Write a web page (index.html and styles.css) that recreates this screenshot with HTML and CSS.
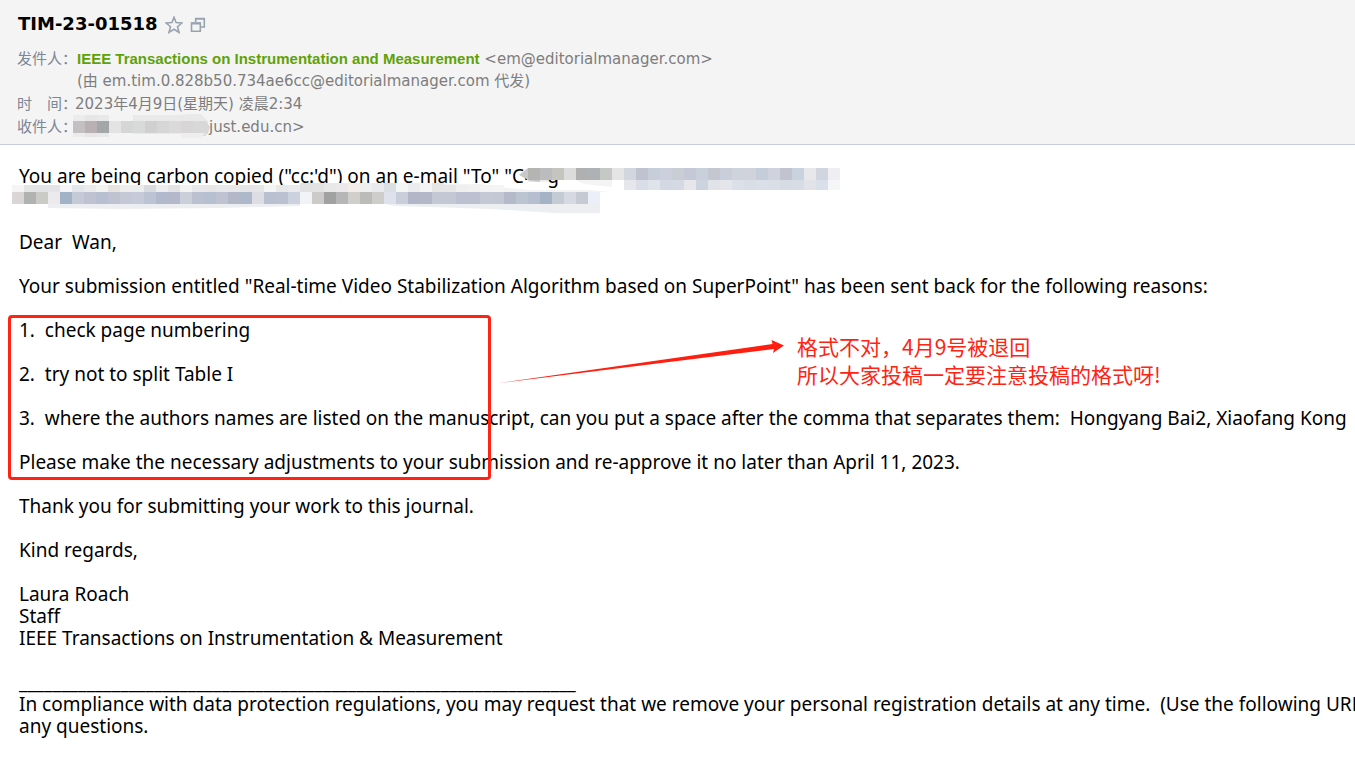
FILE: index.html
```html
<!DOCTYPE html>
<html lang="zh-CN">
<head>
<meta charset="utf-8">
<title>TIM-23-01518</title>
<link rel="stylesheet" href="styles.css">
</head>
<body>
<header class="mail-header">
  <div class="subject-row">
    <h1 class="subject">TIM-23-01518</h1>
    <button class="icon-button" type="button" aria-label="星标">
      <svg width="18" height="18" viewBox="0 0 18 18"><path d="M9 1.3 11.1 6.6 16.9 7 12.5 10.7 14 16.4 9 13.3 4 16.4 5.5 10.7 1.1 7 6.9 6.6Z" fill="none" stroke="#98a3b0" stroke-width="1.6"/></svg>
    </button>
    <button class="icon-button" type="button" aria-label="新窗口打开">
      <svg width="16" height="16" viewBox="0 0 16 16" fill="none" stroke="#98a3b0"><path d="M5.7 5V1.5H14.3V10H10.5M5.2 2H15" stroke-width="1.6"/><path d="M1.5 6H10.3V14.2H1.5Z" stroke-width="1.6"/><path d="M1 6.5H11" stroke-width="2"/></svg>
    </button>
  </div>
  <dl class="meta">
    <dt>发件人：</dt>
    <dd class="sender"><a class="sender-name" href="#">IEEE Transactions on Instrumentation and Measurement</a> &lt;em@editorialmanager.com&gt;<br>(由 em.tim.0.828b50.734ae6cc@editorialmanager.com 代发)</dd>
    <dt>时　间：</dt>
    <dd>2023年4月9日(星期天) 凌晨2:34</dd>
    <dt>收件人：</dt>
    <dd class="recipient"><svg class="mask-recipient" width="138" height="26" viewBox="73 112 138 26" aria-hidden="true"></svg><span>just.edu.cn&gt;</span></dd>
  </dl>
</header>
<main class="mail-body">
  <p>You are being carbon copied ("cc:'d") on an e-mail "To" "Cong<br>&nbsp;</p>
  <p>Dear  Wan,</p>
  <p>Your submission entitled "Real-time Video Stabilization Algorithm based on SuperPoint" has been sent back for the following reasons:</p>
  <p>1.  check page numbering</p>
  <p>2.  try not to split Table I</p>
  <p>3.  where the authors names are listed on the manuscript, can you put a space after the comma that separates them:  Hongyang Bai2, Xiaofang Kong</p>
  <p>Please make the necessary adjustments to your submission and re-approve it no later than April 11, 2023.</p>
  <p>Thank you for submitting your work to this journal.</p>
  <p>Kind regards,</p>
  <p>Laura Roach<br>Staff<br>IEEE Transactions on Instrumentation &amp; Measurement</p>
  <p>__________________________________________________________________<br>In compliance with data protection regulations, you may request that we remove your personal registration details at any time.  (Use the following URL<br>any questions.</p>
  <svg class="mask-body" width="840" height="50" viewBox="0 165 840 50" aria-hidden="true"></svg>
  <div class="highlight"></div>
  <svg class="arrow" width="286" height="46" viewBox="499 338 286 46" aria-hidden="true"><path d="M499 383 772.5 344 771.5 340 784 345.5 773 353 774 349Z" fill="#ff1f10"/></svg>
  <div class="note">格式不对，4月9号被退回<br>所以大家投稿一定要注意投稿的格式呀!</div>
</main>
<script src="mosaic.js"></script>
</body>
</html>
```
FILE: styles.css
```css
* { box-sizing: border-box; }
body {
  margin: 0;
  background: #fff;
  color: #000;
  font-family: "Noto Sans", "Noto Sans CJK SC", sans-serif;
  overflow-x: hidden;
}
.mail-header {
  padding: 12px 17px 6px;
  background: #f4f4f4;
  border-bottom: 1px solid #c6cbdb;
}
.subject-row {
  display: flex;
  align-items: center;
  gap: 7px;
  height: 24px;
  margin-bottom: 12px;
  padding-left: 1px;
}
.subject { margin: 0; font-family: "DejaVu Sans", sans-serif; font-size: 18px; line-height: 24px; }
.icon-button { display: flex; padding: 2px 0 0; border: 0; background: none; }
.meta {
  display: grid;
  grid-template-columns: 58px 1fr;
  margin: 0;
  color: #7d7d7d;
  font-family: "DejaVu Sans", "Noto Sans CJK SC", sans-serif;
  font-size: 15px;
  line-height: 22px;
  row-gap: 1px;
  white-space: nowrap;
}
.meta dt { color: #7c8694; font-family: "Noto Sans CJK SC", sans-serif; line-height: 20px; }
.meta dd { margin: 0; }
.meta .sender { padding-left: 2px; }
.sender-name {
  color: #5fa207;
  font-family: "Liberation Sans", Arial, sans-serif;
  font-weight: 700;
  text-decoration: none;
}
.recipient { display: flex; align-items: center; }
.mask-recipient { margin: -4px -5px -4px -2px; position: relative; }
.recipient span { padding-left: 3px; }
.mail-body {
  position: relative;
  padding: 20px 0 14px 19px;
  overflow: hidden;
  font-size: 19px;
  line-height: 22px;
}
.mail-body p { margin: 0 0 22px; white-space: pre; }
.mail-body p:last-of-type { margin-bottom: 0; }
.mask-body { position: absolute; left: 0; top: 20px; }
.highlight {
  position: absolute;
  left: 8px;
  top: 170px;
  width: 483px;
  height: 165px;
  border: 3px solid #ff2314;
  border-radius: 4px;
}
.arrow { position: absolute; left: 499px; top: 193px; }
.note {
  position: absolute;
  left: 797px;
  top: 187px;
  color: #ff2314;
  font-family: "Noto Sans CJK SC", sans-serif;
  font-size: 21px;
  font-weight: 400;
  line-height: 28px;
}
```
FILE: mosaic.js
```js
// Draws rows of solid cells that cover private details.
function row(svg, x, y, w, h, colors) {
  colors.split(" ").forEach(function (c, i) {
    var r = document.createElementNS("http://www.w3.org/2000/svg", "rect");
    r.setAttribute("x", x + i * w);
    r.setAttribute("y", y);
    r.setAttribute("width", w);
    r.setAttribute("height", h);
    r.setAttribute("fill", "#" + c);
    svg.appendChild(r);
  });
}
function shape(svg, d, fill) {
  var p = document.createElementNS("http://www.w3.org/2000/svg", "path");
  p.setAttribute("d", d);
  p.setAttribute("fill", fill);
  svg.appendChild(p);
}
var to = document.querySelector(".mask-recipient");
shape(to, "M133 113H180L188 112H201L208 119V132H133Z", "#e9e9e9");
row(to, 73, 113, 12, 22, "ececec e6e6e6 e9e9e9");
row(to, 73, 119, 12, 12, "c2c0c0 b8b0b2 a3a7a8 e3e3e3 d5d6d6 d8dada d0d0d0 d6d6d6 dcd9d9 d7d5d5");
shape(to, "M193 119H206L210 125 208 131 205 134H193Z", "#d8d8d8");
shape(to, "M181 131H206L200 136H181Z", "#eeeeee");

var body = document.querySelector(".mask-body");
shape(body, "M396 184H480L498 187 530 190H588L612 192H396Z", "#f4f3f3");
row(body, 12, 185, 12, 7, "f6f4f4 e2e4e6 e2e3e4 e4e4e6 f6f5f5 e1e7eb ebebec f3f3f2 e6e3e1 eeeeef ededed d8dbdf eeeeef e4e4e4 f5f3f2 e8e8ea e9e6e5 e8e9ea e8e8e8 e5e5e5 e6e6e6 f4f5f5 e9e8e8 ebebed e4e2e1");
row(body, 300, 183, 12, 9, "e3e2e2 e3e3e3 e8e8e9 ebe9e9 f2edeb efefef e8eaed dadfe3 f4f5f5 ececee f5f4f4 e6e6e6");
row(body, 444, 185, 12, 7, "e7e7e7 efefef f1f1f1 f3f3f3 f4f4f4");
shape(body, "M48 204H300V206L220 208 120 209 48 208Z", "#eceef2");
shape(body, "M384 204H600V213H555L492 209 396 206Z", "#eceef2");
row(body, 12, 192, 12, 12, "d9d6d5 b0b3b1 c9cbc4 edeaee a2b3c8 c5cbd6 bfc2d0 b8bfd1 bfc2d0 c4c9d5 c5cbd8 bcc3d3 b1b9cc b3b9ca c9d0d9 bbc1d0 b7c0d0 bfc3d1 b3b8c9 adb8ca dddde4 b9c0d1 bbc1d0 cbd2de f2f3f7 cdcbc9 9fa2a0 b6b6b6 d0cfcb bbbcb9 cfcdcb dfe2ec c8cfdb b1b7c9 b3b8c9 c3c8d5 c3c8d5 bbc1d1 bbc1d1 c3cad6 c3c8d5 b5bacb bbc5d2 b5bfd0 a5b3c6 c5cbd5 d7d9e2 c6cad3 eaeff9");
shape(body, "M522 180H548V184H524Z", "#ffffff");
shape(body, "M528 180H548V182H528Z", "#eeeeee");
shape(body, "M576 180H612V187L584 184Z", "#f4f4f4");
shape(body, "M528 168H540V182L530 181 519 175Z", "#c8c8c8");
row(body, 528, 168, 12, 12, "b4b4b2 bbbcbd c5c4be dddcdc b0b0b0 afb2b5 c6c8c6 e5e5e5 d2d6df bfc3cf c5ced9 ccd0dc c8cdd6 c5c8d6 c9d0dc c4c6d0 c8cfdb cfd3dc d1d3dc c6cdda d0d3dd c1c4cf c9d3e0 e7e7ec d1d5e0 eeeef3");
row(body, 624, 180, 12, 10, "e6e7ed d9dde7 dfe4eb d3d8e2 d5d9e3 e6e6eb cdd4e0 e0e4e9 e4e6eb dce0e8 d9dde6 dbdfe7 dadee6 d7dce4 d8dde5 e2e3e8 dae0ea f5f6f8");
```
